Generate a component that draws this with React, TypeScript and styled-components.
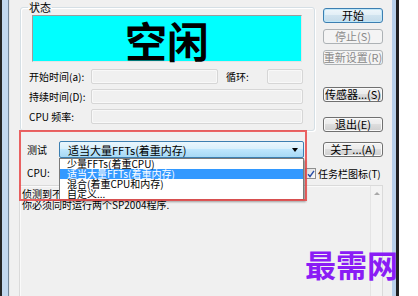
import React from 'react'
import styled, { createGlobalStyle, css } from 'styled-components'

const UI = `"Noto Sans CJK SC", "Liberation Sans", sans-serif`

const GlobalStyle = createGlobalStyle`
  html, body { margin: 0; padding: 0; background: #fff; }
  body { font-family: ${UI}; }
`

const Page = styled.div`
  position: relative;
  width: 418px;
  height: 296px;
  overflow: hidden;
  background: #fff;
  display: flex;
  font-family: ${UI};
  color: #000;
`

const Window = styled.div`
  width: 399px;
  height: 100%;
  display: flex;
`

const FrameLeft = styled.div`
  width: 10px;
  flex: none;
  background: linear-gradient(to right, #262626 0 2px, #c3d8ef 2px 8px, #75889b 8px 9px, #e6e6e6 9px);
`

const FrameRight = styled.div`
  width: 7px;
  flex: none;
  background: linear-gradient(to right, #b7cfe9 0 4px, #202020 4px);
`

const Client = styled.div`
  position: relative;
  flex: 1;
  background: #f0f0f0;
  padding: 0 9px;
  display: flex;
  flex-direction: column;
`

const TopRow = styled.div`
  display: flex;
  height: 185px;
  flex: none;
`

const LeftCol = styled.div`
  width: 296px;
  display: flex;
  flex-direction: column;
`

const GroupBox = styled.fieldset`
  margin: 1px 0 0 1px;
  padding: 2px 12px 6px 11px;
  width: 295px;
  box-sizing: border-box;
  min-width: 0;
  border: 1px solid #d5dfe5;
  border-radius: 3px;
  box-shadow: inset 1px 1px 0 #fff, 1px 1px 0 #fff;
`

const Legend = styled.legend`
  font-size: 11px;
  line-height: 12px;
  padding: 0 1px;
  margin-left: -4px;
`

const StatusDisplay = styled.div`
  height: 47px;
  box-sizing: border-box;
  background: #00ffff;
  border: 1px solid;
  border-color: #9c9c9c #e4e4e4 #e4e4e4 #9c9c9c;
  display: flex;
  align-items: center;
  justify-content: center;
  font-size: 42px;
  font-weight: 700;
  line-height: 1;
  padding-top: 2px;
`

const FieldRow = styled.div<{ $gap: number }>`
  display: flex;
  align-items: center;
  height: 15px;
  margin: ${p => p.$gap}px -1px 0 -3px;
`

const FieldLabel = styled.span<{ $w: number; $indent?: number }>`
  width: ${p => p.$w}px;
  margin-left: ${p => p.$indent ?? 0}px;
  flex: none;
  font-size: 10px;
  line-height: 15px;
  white-space: nowrap;
`

const ReadOnlyBox = styled.div<{ $w?: number }>`
  height: 15px;
  box-sizing: border-box;
  ${p => (p.$w ? css`width: ${p.$w}px; flex: none;` : css`flex: 1;`)}
  border: 1px solid #d6d6d6;
  border-radius: 2px;
  background: #f0f0f0;
  box-shadow: inset 0 0 0 1px #f8f8f8;
`

const ComboRow = styled.div<{ $gap: number; $h: number }>`
  display: flex;
  align-items: center;
  height: ${p => p.$h}px;
  margin-top: ${p => p.$gap}px;
  padding-left: 8px;
`

const RowLabel = styled.span`
  width: 32px;
  flex: none;
  font-size: 10px;
  white-space: nowrap;
`

const ComboWrap = styled.div<{ $h: number }>`
  position: relative;
  width: 245px;
  height: ${p => p.$h}px;
`

const Combo = styled.div<{ $active?: boolean }>`
  height: 100%;
  box-sizing: border-box;
  display: flex;
  align-items: center;
  padding: 0 5px 0 8px;
  font-size: 11px;
  border-radius: 2px;
  white-space: nowrap;
  ${p =>
    p.$active
      ? css`
          border: 1px solid #3c7fb1;
          background: linear-gradient(#eaf6fd 0%, #d9f0fc 45%, #bee6fd 50%, #a7d9f5 100%);
        `
      : css`
          border: 1px solid #707070;
          background: linear-gradient(#f2f2f2 0%, #ebebeb 50%, #dddddd 50%, #cfcfcf 100%);
        `}
`

const ComboArrow = styled.span`
  margin-left: auto;
  width: 0;
  height: 0;
  border-left: 3.5px solid transparent;
  border-right: 3.5px solid transparent;
  border-top: 4px solid #000;
`

const DropList = styled.ul`
  position: absolute;
  top: 100%;
  left: 0;
  width: 245px;
  box-sizing: border-box;
  margin: 0;
  padding: 0;
  list-style: none;
  background: #fff;
  border: 1px solid #7a7a7a;
  box-shadow: 2px 2px 2px rgba(0, 0, 0, 0.35);
  z-index: 5;
`

const DropItem = styled.li<{ $selected?: boolean }>`
  height: 10px;
  display: flex;
  align-items: center;
  font-size: 10px;
  line-height: 10px;
  padding-left: 7px;
  white-space: nowrap;
  background: ${p => (p.$selected ? '#3399ff' : 'transparent')};
  color: ${p => (p.$selected ? '#fff' : '#000')};
`

const RightCol = styled.div`
  margin-left: 8px;
  width: 60px;
  display: flex;
  flex-direction: column;
`

type Variant = 'default' | 'normal' | 'disabled'

const WinButton = styled.button<{ $gap: number; $variant: Variant }>`
  margin-top: ${p => p.$gap}px;
  height: 15px;
  width: 60px;
  padding: 0;
  box-sizing: border-box;
  border-radius: 3px;
  font-family: ${UI};
  font-size: 11px;
  line-height: 13px;
  white-space: nowrap;
  overflow: visible;
  display: flex;
  align-items: center;
  justify-content: center;
  ${p =>
    p.$variant === 'disabled'
      ? css`
          border: 1px solid #adb2b5;
          background: #f4f4f4;
          color: #8a8a8a;
        `
      : p.$variant === 'default'
      ? css`
          border: 1px solid #3c7fb1;
          background: linear-gradient(#eef6fb 0%, #e1eef6 50%, #d0e3ef 50%, #c4dbea 100%);
          box-shadow: inset 0 0 0 1px #bfe7f9;
          color: #000;
        `
      : css`
          border: 1px solid #707070;
          background: linear-gradient(#f2f2f2 0%, #ebebeb 50%, #dddddd 50%, #cfcfcf 100%);
          box-shadow: inset 0 0 0 1px #fafafa;
          color: #000;
        `}
`

const CheckRow = styled.label`
  margin: 10px 0 0 -18px;
  display: flex;
  align-items: center;
  gap: 2px;
  height: 13px;
  font-size: 10px;
  white-space: nowrap;
`

const CheckBox = styled.span`
  width: 11px;
  height: 11px;
  box-sizing: border-box;
  border: 1px solid #8e8f8f;
  background: linear-gradient(135deg, #dcdcdc, #fbfbfb);
  display: flex;
  align-items: center;
  justify-content: center;
  flex: none;
`

const LogBox = styled.div`
  flex: 1;
  display: flex;
  border: 1px solid #dadada;
  border-bottom: none;
  box-shadow: inset 1px 1px 0 #fafafa;
  background: #f0f0f0;
`

const LogText = styled.div`
  flex: 1;
  padding: 2px 0 0 2px;
  font-size: 10px;
  line-height: 11px;
  white-space: nowrap;
  overflow: hidden;
`

const ScrollBar = styled.div`
  width: 12px;
  flex: none;
  border-left: 1px solid #e4e4e4;
  background: #f3f3f3;
  display: flex;
  justify-content: center;
  padding-top: 6px;
  box-sizing: border-box;
`

const UpArrow = styled.span`
  width: 0;
  height: 0;
  border-left: 3px solid transparent;
  border-right: 3px solid transparent;
  border-bottom: 3px solid #a8a8a8;
`

const Annotation = styled.div`
  position: absolute;
  left: 9px;
  top: 130px;
  width: 288px;
  height: 71px;
  box-sizing: border-box;
  border: 2px solid rgba(232, 72, 72, 0.85);
  pointer-events: none;
  z-index: 6;
`

const Watermark = styled.div`
  position: absolute;
  left: 305px;
  top: 248px;
  font-size: 31px;
  font-weight: 700;
  line-height: 1;
  color: #8a1cf5;
  white-space: nowrap;
  z-index: 7;
`

const options = ['少量FFTs(着重CPU)', '适当大量FFTs(着重内存)', '混合(着重CPU和内存)', '自定义...']

export default function App() {
  return (
    <Page>
      <GlobalStyle />
      <Window>
        <FrameLeft />
        <Client>
          <TopRow>
            <LeftCol>
              <GroupBox>
                <Legend>状态</Legend>
                <StatusDisplay>空闲</StatusDisplay>
                <FieldRow $gap={7}>
                  <FieldLabel $w={62}>开始时间(a):</FieldLabel>
                  <ReadOnlyBox $w={127} />
                  <FieldLabel $w={41} $indent={8}>循环:</FieldLabel>
                  <ReadOnlyBox />
                </FieldRow>
                <FieldRow $gap={5}>
                  <FieldLabel $w={62}>持续时间(D):</FieldLabel>
                  <ReadOnlyBox />
                </FieldRow>
                <FieldRow $gap={5}>
                  <FieldLabel $w={62}>CPU 频率:</FieldLabel>
                  <ReadOnlyBox />
                </FieldRow>
              </GroupBox>

              <ComboRow $gap={10} $h={17}>
                <RowLabel>测试</RowLabel>
                <ComboWrap $h={17}>
                  <Combo $active>
                    适当大量FFTs(着重内存)
                    <ComboArrow />
                  </Combo>
                  <DropList>
                    {options.map((o, i) => (
                      <DropItem key={o} $selected={i === 1}>
                        {o}
                      </DropItem>
                    ))}
                  </DropList>
                </ComboWrap>
              </ComboRow>

              <ComboRow $gap={6} $h={16}>
                <RowLabel>CPU:</RowLabel>
                <ComboWrap $h={16}>
                  <Combo>
                    <ComboArrow />
                  </Combo>
                </ComboWrap>
              </ComboRow>
            </LeftCol>

            <RightCol>
              <WinButton $gap={8} $variant="default">开始</WinButton>
              <WinButton $gap={6} $variant="disabled">停止(S)</WinButton>
              <WinButton $gap={6} $variant="disabled">重新设置(R)</WinButton>
              <WinButton $gap={22} $variant="normal">传感器...(S)</WinButton>
              <WinButton $gap={15} $variant="normal">退出(E)</WinButton>
              <WinButton $gap={10} $variant="normal">关于...(A)</WinButton>
              <CheckRow>
                <CheckBox>
                  <svg width="8" height="8" viewBox="0 0 8 8">
                    <path d="M1 4.2 L3 6.5 L7 0.8" fill="none" stroke="#2a4fa8" strokeWidth="1.4" />
                  </svg>
                </CheckBox>
                任务栏图标(T)
              </CheckRow>
            </RightCol>
          </TopRow>

          <LogBox>
            <LogText>
              侦测到不止一个CPU。
              <br />
              你必须同时运行两个SP2004程序.
            </LogText>
            <ScrollBar>
              <UpArrow />
            </ScrollBar>
          </LogBox>

          <Annotation />
        </Client>
        <FrameRight />
      </Window>
      <Watermark>最需网</Watermark>
    </Page>
  )
}
